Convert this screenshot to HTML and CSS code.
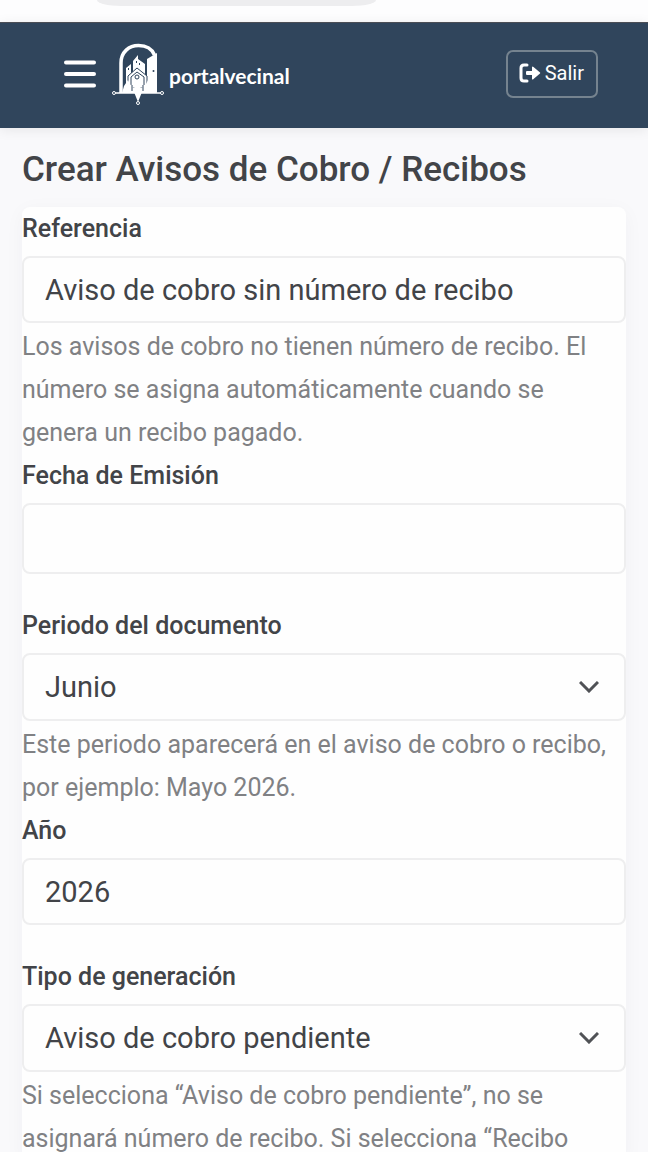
FILE: index.html
```html
<!DOCTYPE html>
<html lang="es">
<head>
  <meta charset="UTF-8">
  <meta name="viewport" content="width=device-width, initial-scale=1.0">
  <title>Crear Avisos de Cobro / Recibos</title>
  <link rel="stylesheet" href="styles.css">
</head>
<body>

  <div class="top-strip">
    <div class="top-pill"></div>
  </div>

  <header class="navbar">
    <button class="menu-btn" type="button" aria-label="Menú">
      <svg width="32" height="30" viewBox="0 0 32 30" fill="none" stroke="#fff" stroke-width="4" stroke-linecap="round">
        <path d="M2 3.5h28M2 15h28M2 26.5h28"/>
      </svg>
    </button>

    <a class="brand" href="#">
      <svg class="brand-logo" width="54" height="64" viewBox="0 0 54 64" fill="none">
        <!-- arco -->
        <path d="M10 51V21C10 10 18 3.500 27.500 3.500C35 3.500 41 7 43.500 13" stroke="#fff" stroke-width="3.500"/>
        <!-- puerta abierta -->
        <path d="M36 17L46 11V51L36 47Z" fill="#fff"/>
        <circle cx="42.500" cy="29" r="1" fill="#30455c"/>
        <!-- edificios -->
        <path d="M15 26L20 22V46H15ZM22 19L27 13V17L34 22V46H22Z" fill="#fff"/>
        <path d="M17 27h1M25 20h1M28 22h1" stroke="#30455c" stroke-width="2"/>
        <!-- casa -->
        <path d="M17 34L26 26L36 34V46H17Z" fill="#fff" stroke="#30455c"/>
        <path d="M20 43V35L26 30L33 35V43" stroke="#30455c"/>
        <circle cx="26" cy="35" r="2" stroke="#30455c"/>
        <!-- vecinos -->
        <path d="M11 51L13 44L17 38L20 44L23 46L26 41L30 46L34 44L37 38L40 44L46 51Z" fill="#fff"/>
        <path d="M21 43V49M32 43V49" stroke="#30455c"/>
        <path d="M3 51H51" stroke="#fff" stroke-width="1.500"/>
        <path d="M23 50H31L27 60Z" fill="#fff"/>
        <circle cx="3" cy="51" r="1.500" fill="#30455c" stroke="#fff"/>
        <circle cx="51" cy="51" r="1.500" fill="#30455c" stroke="#fff"/>
        <circle cx="27" cy="61" r="1.500" fill="#30455c" stroke="#fff"/>
      </svg>
      <span class="brand-name">portalvecinal</span>
    </a>

    <button class="logout-btn" type="button">
      <svg width="22" height="20" viewBox="0 0 22 20">
        <path d="M8 2H5Q2 2 2 5V15Q2 18 5 18H8" fill="none" stroke="#fff" stroke-width="3" stroke-linecap="round"/>
        <path d="M8 8H13V4Q13.500 3 14.500 4L21 9.500Q21.500 10 21 10.500L14.500 16Q13.500 17 13 16V12H8Q7 12 7 11V9Q7 8 8 8Z" fill="#fff"/>
      </svg>
      Salir
    </button>
  </header>

  <main class="content">
    <h1>Crear Avisos de Cobro / Recibos</h1>

    <form class="card">
      <div class="field">
        <label for="referencia">Referencia</label>
        <input type="text" id="referencia" value="Aviso de cobro sin número de recibo" aria-describedby="ayudaReferencia">
        <p class="help" id="ayudaReferencia">Los avisos de cobro no tienen número de recibo. El número se asigna automáticamente cuando se genera un recibo pagado.</p>
      </div>

      <div class="field spaced">
        <label for="fecha">Fecha de Emisión</label>
        <input class="date-input" type="text" id="fecha">
      </div>

      <div class="field">
        <label for="periodo">Periodo del documento</label>
        <select id="periodo" aria-describedby="ayudaPeriodo">
          <option>Junio</option>
        </select>
        <p class="help" id="ayudaPeriodo">Este periodo aparecerá en el aviso de cobro o recibo, por ejemplo: Mayo 2026.</p>
      </div>

      <div class="field spaced">
        <label for="anio">Año</label>
        <input type="text" inputmode="numeric" id="anio" value="2026">
      </div>

      <div class="field">
        <label for="tipo">Tipo de generación</label>
        <select id="tipo" aria-describedby="ayudaTipo">
          <option>Aviso de cobro pendiente</option>
        </select>
        <p class="help" id="ayudaTipo">Si selecciona “Aviso de cobro pendiente”, no se asignará número de recibo. Si selecciona “Recibo</p>
      </div>
    </form>
  </main>

</body>
</html>
```
FILE: styles.css
```css
* {
  box-sizing: border-box;
}

body {
  margin: 0;
  font-family: Roboto, "Liberation Sans", sans-serif;
  background-color: #f9f9fb;
  color: #424448;
}

.top-strip {
  height: 22px;
  background-color: #fdfdfe;
}

.top-pill {
  width: 43%;
  height: 6px;
  margin-left: 15%;
  background-color: #ededef;
  border-radius: 0 0 24px 24px / 0 0 6px 6px;
}

.navbar {
  display: flex;
  align-items: center;
  height: 106px;
  padding: 0 50px 4px 64px;
  background-color: #30455c;
  border-top: 1px solid #4b4e56;
  box-shadow: 0 2px 12px rgba(0, 0, 0, 0.08);
}

.menu-btn {
  display: flex;
  padding: 0;
  background: none;
  border: none;
  cursor: pointer;
}

.brand {
  display: flex;
  align-items: center;
  gap: 4px;
  margin-left: 15px;
  color: #fff;
  text-decoration: none;
}

.brand-name {
  padding-top: 4px;
  font-family: Lato, sans-serif;
  font-size: 21px;
  font-weight: 700;
}

.logout-btn {
  display: flex;
  align-items: center;
  gap: 4px;
  height: 48px;
  margin-left: auto;
  padding: 0 12px 2px 11px;
  font-family: inherit;
  font-size: 20px;
  color: #fff;
  background: none;
  border: 2px solid #75838f;
  border-radius: 7px;
  cursor: pointer;
}

.content {
  padding: 20px 22px 0;
}

h1 {
  margin: 0 0 15px;
  font-size: 35px;
  line-height: 44px;
  font-weight: 500;
}

.card {
  background-color: #fefefe;
  border-radius: 8px;
  box-shadow: 0 4px 20px rgba(40, 40, 80, 0.04);
}

.spaced {
  margin-bottom: 30px;
}

label {
  display: block;
  margin-bottom: 5px;
  font-size: 25px;
  line-height: 44px;
  font-weight: 500;
}

input,
select {
  display: block;
  width: 100%;
  height: 67px;
  padding: 0 21px;
  font-family: inherit;
  font-size: 29px;
  color: #424448;
  background-color: #fefefe;
  border: 2px solid #eeeeef;
  border-radius: 8px;
}

.date-input {
  height: 71px;
}

select {
  height: 68px;
  appearance: none;
  background-image: url("data:image/svg+xml,%3Csvg xmlns='http://www.w3.org/2000/svg' width='20' height='12' fill='none' stroke='%23505256' stroke-width='3'%3E%3Cpath d='M1 1L10 10L19 1'/%3E%3C/svg%3E");
  background-repeat: no-repeat;
  background-position: right 25px center;
}

.help {
  margin: 2px 0 0;
  padding-right: 8px;
  font-size: 25px;
  line-height: 43px;
  color: #808184;
}
```
